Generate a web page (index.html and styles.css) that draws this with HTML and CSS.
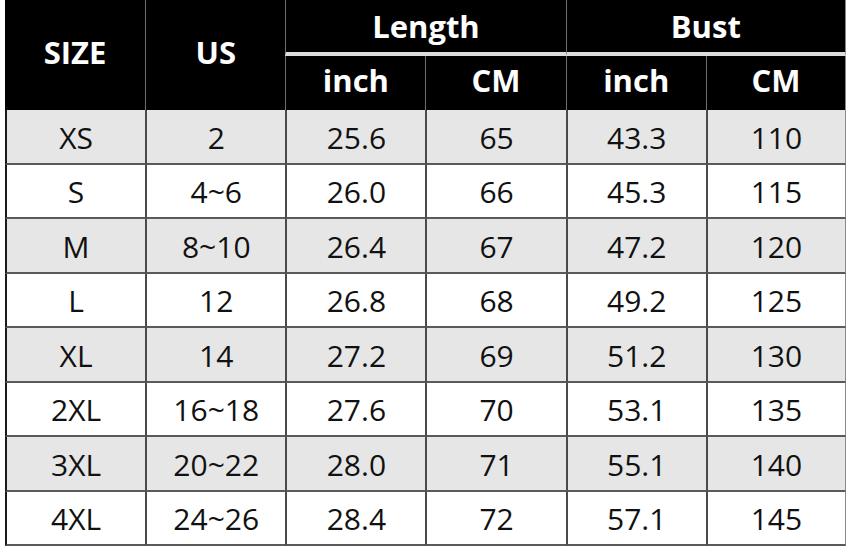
FILE: index.html
```html
<!DOCTYPE html>
<html>
<head>
<meta charset="utf-8">
<link rel="stylesheet" href="styles.css">
</head>
<body>
<table class="chart">
  <colgroup>
    <col class="c"><col class="c"><col class="c"><col class="c"><col class="c"><col class="c">
  </colgroup>
  <thead>
    <tr class="h1">
      <th rowspan="2" class="main first">SIZE</th>
      <th rowspan="2" class="main">US</th>
      <th colspan="2" class="group">Length</th>
      <th colspan="2" class="group last">Bust</th>
    </tr>
    <tr class="h2">
      <th>inch</th>
      <th>CM</th>
      <th>inch</th>
      <th class="last">CM</th>
    </tr>
  </thead>
  <tbody>
    <tr class="alt"><td>XS</td><td>2</td><td>25.6</td><td>65</td><td>43.3</td><td>110</td></tr>
    <tr><td>S</td><td>4~6</td><td>26.0</td><td>66</td><td>45.3</td><td>115</td></tr>
    <tr class="alt"><td>M</td><td>8~10</td><td>26.4</td><td>67</td><td>47.2</td><td>120</td></tr>
    <tr><td>L</td><td>12</td><td>26.8</td><td>68</td><td>49.2</td><td>125</td></tr>
    <tr class="alt"><td>XL</td><td>14</td><td>27.2</td><td>69</td><td>51.2</td><td>130</td></tr>
    <tr><td>2XL</td><td>16~18</td><td>27.6</td><td>70</td><td>53.1</td><td>135</td></tr>
    <tr class="alt"><td>3XL</td><td>20~22</td><td>28.0</td><td>71</td><td>55.1</td><td>140</td></tr>
    <tr><td>4XL</td><td>24~26</td><td>28.4</td><td>72</td><td>57.1</td><td>145</td></tr>
  </tbody>
</table>
</body>
</html>
```
FILE: styles.css
```css
html, body {
  margin: 0;
  padding: 0;
  background: #ffffff;
}

.chart {
  margin-left: 5px;
  width: 841px;
  table-layout: fixed;
  border-collapse: separate;
  border-spacing: 0;
  font-family: "Open Sans", "Noto Sans", sans-serif;
}

.c {
  width: 16.666%;
}

th {
  background: #000000;
  color: #ffffff;
  font-weight: 700;
  font-size: 31px;
  padding: 0;
  border-left: 1px solid #6e6e6e;
  text-align: center;
  line-height: 1;
}

th.first {
  border-left: none;
}

th.last {
  border-right: 1px solid #8a8a8a;
}

.h1 th.group {
  height: 52px;
  border-bottom: 4px solid #dcdcdc;
  padding: 0;
}

.h2 th {
  height: 48px;
  padding: 0 0 6px 0;
}

th.main {
  padding: 0 0 6px 0;
}

td {
  height: 49.5px;
  padding: 3px 0 0 0;
  text-align: center;
  font-size: 30px;
  line-height: 1;
  color: #111111;
  border-left: 2px solid #4a4a4a;
  border-bottom: 2px solid #5a5a5a;
}

td:first-child {
  border-left: 2px solid #1a1a1a;
}

td:last-child {
  border-right: 1px solid #8a8a8a;
}

tr.alt td {
  background: #e6e6e6;
}
```
